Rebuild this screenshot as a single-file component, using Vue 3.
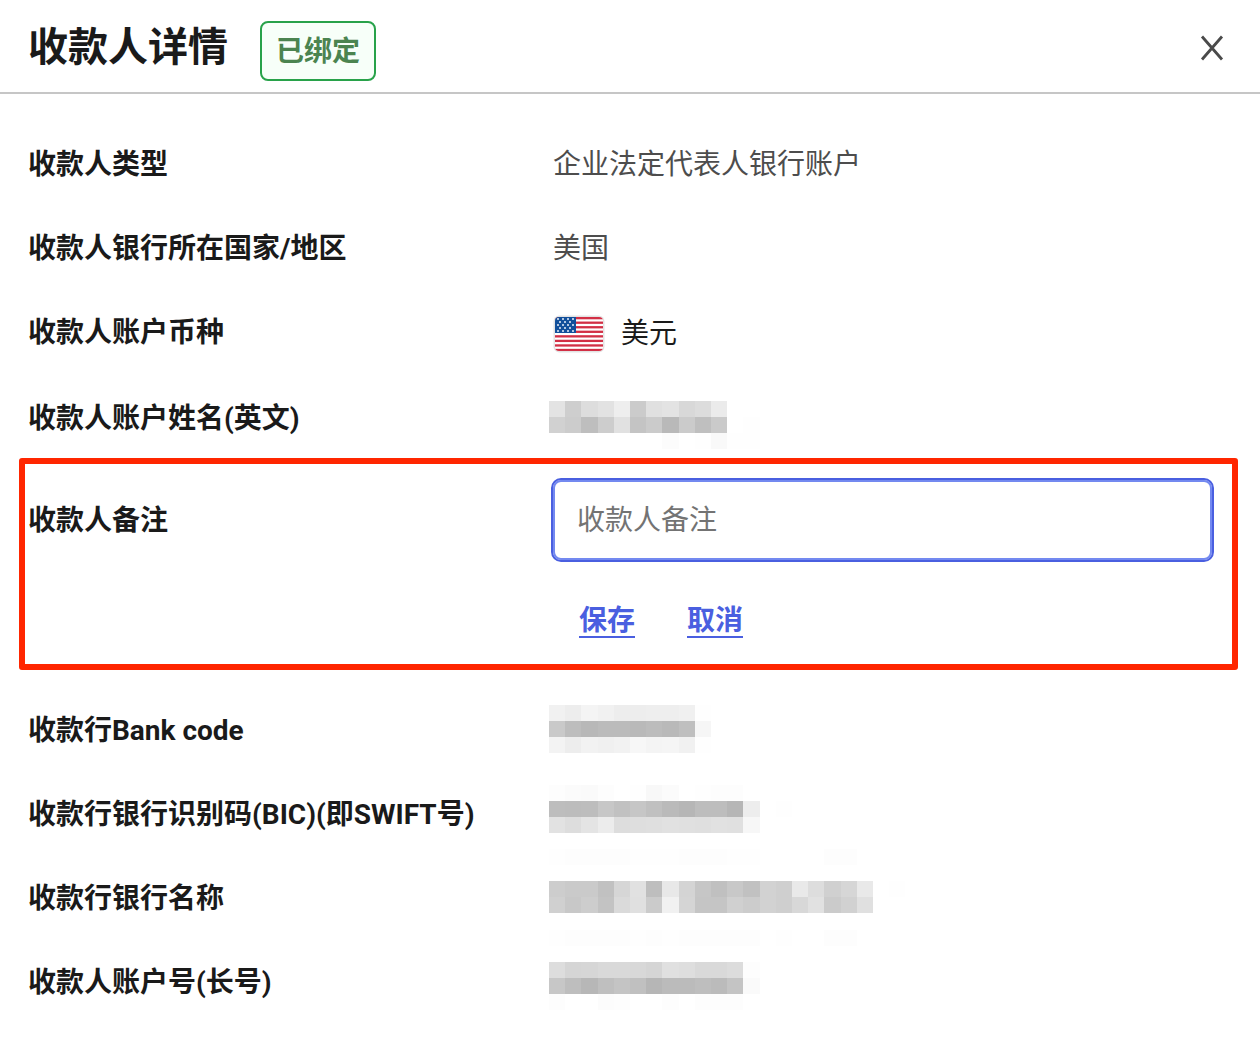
<script setup>
import { ref } from 'vue'

const note = ref('')

// Masked values: each line is a strip of grey cells, y is measured from the row's top edge
const masks = {
  name: [
    { y: 26, cells: 'e3 ce dd e2 ee cb e0 e3 d8 dc eb' },
    { y: 42, cells: 'd1 cc be cd e1 c4 cb b9 cb bf ca ff fe' },
    { y: 58, cells: 'ff ff ff ff ff ff ff fc ff fe f9 fe fe' }
  ],
  code: [
    { y: 18, cells: 'f1 ed f4 f1 ed ed ee ee f0 fe' },
    { y: 34, cells: 'c9 bd b8 bb bb b9 bc b9 bf f6' },
    { y: 50, cells: 'f3 ed f2 f0 f2 f7 f4 f5 f1 fe' }
  ],
  bic: [
    { y: 14, cells: 'fd fb fa fd ff fe f8 fb ff fe fd fd' },
    { y: 30, cells: 'bd bc bd c7 c1 c6 c0 ba b6 bd bd b6 ed ff fe' },
    { y: 46, cells: 'e2 dd e4 ec dd de df e1 e0 df e1 e0 f7' }
  ],
  bank: [
    { y: -6, cells: 'fe fd fd fd fd fe fe fe fd fd fd fe fe ff ff ff ff fd fd' },
    { y: 26, cells: 'cd ca ca c1 d6 e1 be e8 d4 c6 c0 c8 c1 d2 cf e9 dd d0 d6 e9 ff fe' },
    { y: 42, cells: 'd0 c8 cd c3 da e0 cb f1 d5 c5 c5 d0 cc d2 cf d8 e1 cb d1 e0' },
    { y: 75, cells: 'fe fd fd fd fd fe fd fe fd fd fd fd fd ff fe ff ff fd fd' }
  ],
  account: [
    { y: 23, cells: 'dd d5 d6 d9 d9 d8 d5 e0 de d9 d9 dc fd' },
    { y: 39, cells: 'c7 be b7 bf c4 c0 b6 bb bb be bb c4 fa' },
    { y: 55, cells: 'fd ff ff fc fd ff ff fd ff fd fd fd' }
  ]
}

const edge = (i) => Math.round(i * 16.2)

const toRects = (lines) =>
  lines.flatMap(({ y, cells }) =>
    cells.split(' ').map((g, i) => ({
      x: edge(i),
      y,
      width: edge(i + 1) - edge(i),
      height: 16,
      fill: `#${g}${g}${g}`
    }))
  )

const topRows = [
  { label: '收款人类型', text: '企业法定代表人银行账户' },
  { label: '收款人银行所在国家/地区', text: '美国' },
  { label: '收款人账户币种', currency: '美元' },
  { label: '收款人账户姓名(英文)', rects: toRects(masks.name) }
]

const bottomRows = [
  { label: '收款行Bank code', rects: toRects(masks.code) },
  { label: '收款行银行识别码(BIC)(即SWIFT号)', rects: toRects(masks.bic) },
  { label: '收款行银行名称', rects: toRects(masks.bank) },
  { label: '收款人账户号(长号)', rects: toRects(masks.account) }
]

const stars = [0, 1, 2, 3, 4].flatMap((r) =>
  (r % 2 ? [5, 10, 15] : [3, 8, 13, 18]).map((x) => ({ x, y: 3 + r * 3 }))
)
</script>

<template>
  <main class="panel">
    <header class="head">
      <h1 class="title">收款人详情</h1>
      <span class="badge">已绑定</span>
      <button class="close" type="button" aria-label="关闭">
        <svg width="24" height="26" viewBox="0 0 24 26" aria-hidden="true">
          <path d="M2 1.5 22 24.5M22 1.5 2 24.5" fill="none" stroke="#4a4a4a" stroke-width="2.8" />
        </svg>
      </button>
    </header>

    <div class="body">
      <dl class="list">
        <div v-for="row in topRows" :key="row.label" class="row">
          <dt class="label">{{ row.label }}</dt>
          <dd class="value">
            <span v-if="row.currency" class="currency">
              <svg class="flag" width="52" height="38" viewBox="0 0 52 38" aria-hidden="true">
                <defs>
                  <clipPath id="flag-clip"><rect x="2" y="2" width="48" height="34" rx="4" /></clipPath>
                </defs>
                <rect x="0.5" y="0.5" width="51" height="37" rx="6" fill="#e3e3e3" />
                <g clip-path="url(#flag-clip)">
                  <rect x="2" y="2" width="48" height="34" fill="#fff" />
                  <rect v-for="i in 8" :key="i" x="2" :y="2 + (i - 1) * 4.55" width="48" height="2.3" fill="#d22f45" />
                  <rect x="2" y="2" width="21" height="16" fill="#12509b" />
                  <circle v-for="(s, i) in stars" :key="i" :cx="s.x + 2" :cy="s.y + 1" r="1" fill="#e6eef8" />
                </g>
              </svg>
              {{ row.currency }}
            </span>
            <svg v-else-if="row.rects" class="mask" role="img" aria-label="已隐藏" shape-rendering="crispEdges">
              <rect v-for="(r, i) in row.rects" :key="i" v-bind="r" />
            </svg>
            <template v-else>{{ row.text }}</template>
          </dd>
        </div>
      </dl>

      <form class="row note" @submit.prevent>
        <label class="label" for="note">收款人备注</label>
        <div class="edit">
          <input id="note" v-model="note" class="input" type="text" placeholder="收款人备注" />
          <div class="actions">
            <button class="action" type="submit">保存</button>
            <button class="action" type="button" @click="note = ''">取消</button>
          </div>
        </div>
      </form>

      <dl class="list">
        <div v-for="row in bottomRows" :key="row.label" class="row">
          <dt class="label">{{ row.label }}</dt>
          <dd class="value">
            <svg class="mask" role="img" aria-label="已隐藏" shape-rendering="crispEdges">
              <rect v-for="(r, i) in row.rects" :key="i" v-bind="r" />
            </svg>
          </dd>
        </div>
      </dl>
    </div>
  </main>
</template>

<style>
body {
  margin: 0;
  background: #fff;
}
</style>

<style scoped>
.panel {
  font-family: Roboto, "Noto Sans CJK SC", sans-serif;
  font-size: 28px;
  line-height: 42px;
  color: #1a1a1a;
}

.head {
  display: flex;
  align-items: flex-start;
  padding: 18px 32px 11px 28px;
  border-bottom: 2px solid #c6c6c6;
}

.title {
  margin: 0;
  font-size: 40px;
  line-height: 60px;
  font-weight: 700;
}

.badge {
  box-sizing: border-box;
  height: 60px;
  margin: 3px 0 0 32px;
  padding: 8px 14px;
  border: 2px solid #28a24a;
  border-radius: 8px;
  background: #f7fff9;
  color: #4b8450;
  font-weight: 700;
}

.close {
  display: flex;
  margin: 13px 0 0 auto;
  padding: 4px;
  border: 0;
  background: none;
  cursor: pointer;
}

.body {
  padding: 27px 0 16px;
}

.list {
  margin: 0;
}

.row {
  display: grid;
  grid-template-columns: 5fr 7fr;
  align-items: start;
  padding: 23px 0 19px;
}

.label {
  padding-left: 28px;
  font-weight: 700;
}

.value {
  margin: 0;
  padding-left: 28px;
  color: #4d4d4d;
}

.currency {
  display: flex;
  align-items: center;
  gap: 16px;
  line-height: 44px;
  color: #1a1a1a;
}

.flag {
  display: block;
}

.mask {
  display: block;
  width: 360px;
  height: 84px;
  margin: -23px 0 -19px -4px;
  overflow: visible;
}

.note {
  position: relative;
  padding: 19px 0 49px;
}

.note::after {
  content: "";
  position: absolute;
  inset: -1px 22px 17px 19px;
  border: 6px solid #ff2600;
  border-radius: 3px;
  pointer-events: none;
}

.note .label {
  padding-top: 22px;
}

.edit {
  padding: 0 46px 0 26px;
}

.input {
  display: block;
  box-sizing: border-box;
  width: 100%;
  height: 84px;
  padding: 0 24px;
  border: 2px solid #4a5fe0;
  border-radius: 10px;
  outline: 0;
  box-shadow: inset 0 0 0 2px #7389f0;
  background: #fff;
  color: #1a1a1a;
  font: inherit;
}

.input::placeholder {
  color: #737373;
  opacity: 1;
}

.actions {
  display: flex;
  gap: 52px;
  padding: 44px 28px 0;
}

.action {
  padding: 0;
  border: 0;
  border-bottom: 2px solid #4a5fe0;
  background: none;
  color: #4a5fe0;
  font: inherit;
  font-weight: 700;
  line-height: 30px;
  cursor: pointer;
}
</style>
